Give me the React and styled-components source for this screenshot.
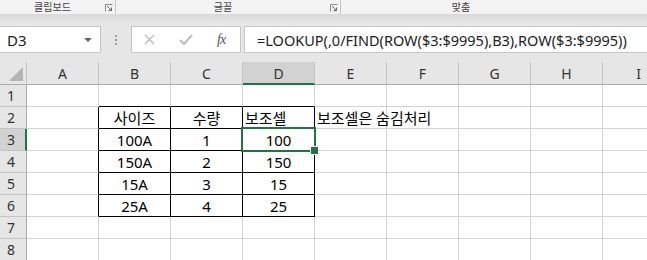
import React from 'react';
import styled, { createGlobalStyle } from 'styled-components';

const GlobalStyle = createGlobalStyle`
  html, body {
    margin: 0;
    padding: 0;
    width: 647px;
    height: 260px;
    overflow: hidden;
    background: #e6e6e6;
  }
  * {
    box-sizing: border-box;
  }
`;

const GREEN = '#217346';
const COLS = ['A', 'B', 'C', 'D', 'E', 'F', 'G', 'H', 'I'];

const Window = styled.div`
  width: 647px;
  height: 260px;
  overflow: hidden;
  display: flex;
  flex-direction: column;
  font-family: 'Noto Sans', 'Noto Sans CJK KR', sans-serif;
`;

/* ribbon group labels */
const Ribbon = styled.div`
  height: 14px;
  background: #f3f3f3;
  display: flex;
  align-items: center;
  flex-shrink: 0;
`;

const Group = styled.div`
  width: ${p => p.$width}px;
  height: 100%;
  display: flex;
  align-items: flex-start;
  border-right: ${p => (p.$sep ? '1px solid #c8c8c8' : 'none')};
`;

const GroupLabel = styled.span`
  flex: 1;
  text-align: center;
  font-family: 'Noto Sans CJK KR', sans-serif;
  font-size: 10px;
  line-height: 11px;
  padding-top: 1px;
  color: #444;
`;

const Launcher = styled.svg`
  width: 8px;
  height: 8px;
  margin: 4px 2px 0 0;
`;

const RibbonShadow = styled.div`
  height: 12px;
  flex-shrink: 0;
  background: linear-gradient(#d9d9d9, #e6e6e6 70%);
`;

/* formula bar */
const FormulaBar = styled.div`
  height: 27px;
  display: flex;
  align-items: stretch;
  flex-shrink: 0;
`;

const NameBox = styled.div`
  width: 101px;
  background: #fff;
  border: 1px solid #c6c6c6;
  border-left: none;
  display: flex;
  align-items: center;
  justify-content: space-between;
  padding: 0 8px 0 7px;
  font-size: 15px;
  color: #222;
`;

const Caret = styled.span`
  width: 0;
  height: 0;
  border-left: 4px solid transparent;
  border-right: 4px solid transparent;
  border-top: 4px solid #666;
`;

const Grip = styled.div`
  width: 30px;
  display: flex;
  flex-direction: column;
  align-items: center;
  justify-content: center;
  gap: 2px;

  span {
    width: 2px;
    height: 2px;
    background: #9c9c9c;
  }
`;

const ButtonsBox = styled.div`
  width: 110px;
  background: #fff;
  border: 1px solid #c6c6c6;
  display: flex;
  align-items: center;
  padding-left: 12px;
  gap: 24px;
`;

const Fx = styled.span`
  font-family: 'Liberation Serif', serif;
  font-style: italic;
  font-size: 14px;
  color: #555;
  letter-spacing: -1px;
`;

const FormulaInput = styled.div`
  flex: 1;
  margin-left: 3px;
  background: #fff;
  border: 1px solid #c6c6c6;
  border-right: none;
  display: flex;
  align-items: center;
  padding-left: 12px;
  font-size: 14.5px;
  color: #222;
  white-space: nowrap;
`;

const Gap = styled.div`
  height: 9px;
  flex-shrink: 0;
`;

/* sheet grid */
const Sheet = styled.div`
  display: grid;
  grid-template-columns: 27px repeat(9, 72px);
  grid-template-rows: 23px repeat(8, 22px);
  background: #fff;
`;

const Corner = styled.div`
  background: #e6e6e6;
  border-right: 1px solid #c4c4c4;
  border-bottom: 1px solid #ababab;
  position: relative;

  &::after {
    content: '';
    position: absolute;
    right: 3px;
    bottom: 3px;
    border-left: 14px solid transparent;
    border-bottom: 14px solid #b4b4b4;
  }
`;

const ColHead = styled.div`
  background: ${p => (p.$active ? '#d2d2d2' : '#e6e6e6')};
  border-right: 1px solid #c4c4c4;
  border-bottom: ${p => (p.$active ? `2px solid ${GREEN}` : '1px solid #ababab')};
  display: flex;
  align-items: center;
  justify-content: center;
  padding-top: ${p => (p.$active ? 1 : 0)}px;
  font-size: 14px;
  color: #333;
`;

const RowHead = styled.div`
  background: ${p => (p.$active ? '#d2d2d2' : '#e6e6e6')};
  border-right: ${p => (p.$active ? `2px solid ${GREEN}` : '1px solid #ababab')};
  border-bottom: 1px solid #c4c4c4;
  display: flex;
  align-items: center;
  padding-left: 7px;
  font-size: 14px;
  color: #333;
`;

const Cell = styled.div`
  position: relative;
  border-right: 1px solid ${p => (p.$darkRight ? '#000' : '#d4d4d4')};
  border-bottom: 1px solid ${p => (p.$darkBottom ? '#000' : '#d4d4d4')};
  display: flex;
  align-items: center;
  justify-content: ${p => (p.$align === 'left' ? 'flex-start' : 'center')};
  padding: 1px 2px 0;
  font-size: 15px;
  line-height: 20px;
  color: #000;
  white-space: nowrap;
  overflow: visible;
  z-index: ${p => (p.$spill ? 2 : 'auto')};
`;

const Selection = styled.div`
  position: absolute;
  left: -2px;
  top: -2px;
  right: -2px;
  bottom: -2px;
  border: 2px solid ${GREEN};
  pointer-events: none;
  z-index: 3;

  &::after {
    content: '';
    position: absolute;
    right: -5px;
    bottom: -5px;
    width: 7px;
    height: 7px;
    background: ${GREEN};
    border: 1px solid #fff;
  }
`;

const data = {
  B2: '사이즈', C2: '수량', D2: '보조셀', E2: '보조셀은 숨김처리',
  B3: '100A', C3: '1', D3: '100',
  B4: '150A', C4: '2', D4: '150',
  B5: '15A', C5: '3', D5: '15',
  B6: '25A', C6: '4', D6: '25',
};

const leftAligned = ['D2', 'E2'];

const LauncherIcon = () => (
  <Launcher viewBox="0 0 8 8">
    <path d="M0.5 7.5V0.5H7.5" fill="none" stroke="#8a8a8a" strokeWidth="1" />
    <path d="M2 2L6.5 6.5M3.5 6.5H6.5V3.5" fill="none" stroke="#666" strokeWidth="1" />
  </Launcher>
);

const CancelIcon = () => (
  <svg width="11" height="11" viewBox="0 0 11 11">
    <path d="M1 1L10 10M10 1L1 10" stroke="#bcbcbc" strokeWidth="1.4" />
  </svg>
);

const EnterIcon = () => (
  <svg width="14" height="11" viewBox="0 0 14 11">
    <path d="M1 6L5 10L13 1" fill="none" stroke="#bcbcbc" strokeWidth="2" />
  </svg>
);

export default function App() {
  const rows = [1, 2, 3, 4, 5, 6, 7, 8];
  return (
    <Window>
      <GlobalStyle />
      <Ribbon>
        <Group $width={116} $sep>
          <GroupLabel>클립보드</GroupLabel>
          <LauncherIcon />
        </Group>
        <Group $width={225} $sep>
          <GroupLabel>글꼴</GroupLabel>
          <LauncherIcon />
        </Group>
        <Group $width={240}>
          <GroupLabel>맞춤</GroupLabel>
        </Group>
      </Ribbon>
      <RibbonShadow />
      <FormulaBar>
        <NameBox>
          D3
          <Caret />
        </NameBox>
        <Grip>
          <span />
          <span />
          <span />
        </Grip>
        <ButtonsBox>
          <CancelIcon />
          <EnterIcon />
          <Fx>fx</Fx>
        </ButtonsBox>
        <FormulaInput>=LOOKUP(,0/FIND(ROW($3:$9995),B3),ROW($3:$9995))</FormulaInput>
      </FormulaBar>
      <Gap />
      <Sheet>
        <Corner />
        {COLS.map(c => (
          <ColHead key={c} $active={c === 'D'}>
            {c}
          </ColHead>
        ))}
        {rows.map(r => (
          <React.Fragment key={r}>
            <RowHead $active={r === 3}>{r}</RowHead>
            {COLS.map((c, ci) => {
              const id = c + r;
              const inTableCols = ci >= 1 && ci <= 3;
              const darkBottom = inTableCols && r >= 1 && r <= 6;
              const darkRight = ci <= 3 && r >= 2 && r <= 6;
              return (
                <Cell
                  key={id}
                  $darkBottom={darkBottom}
                  $darkRight={darkRight}
                  $align={leftAligned.includes(id) ? 'left' : 'center'}
                  $spill={id === 'E2'}
                >
                  {data[id]}
                  {id === 'D3' && <Selection />}
                </Cell>
              );
            })}
          </React.Fragment>
        ))}
      </Sheet>
    </Window>
  );
}
